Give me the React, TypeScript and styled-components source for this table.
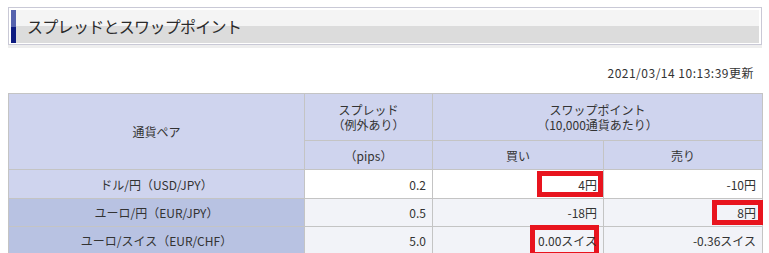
import React from "react";
import styled, { createGlobalStyle } from "styled-components";

const GlobalStyle = createGlobalStyle`
  html, body { margin: 0; padding: 0; background: #ffffff; }
  body {
    font-family: "Noto Sans CJK JP", "Noto Sans", sans-serif;
    color: #333333;
    font-size: 12px;
  }
`;

const Page = styled.div`
  width: 769px;
  box-sizing: border-box;
  padding: 7px 7px 0 8px;
`;

const TitleBox = styled.div`
  box-sizing: border-box;
  height: 38px;
  border: 1px solid #c9c9d6;
  padding: 2px 2px 1px 2px;
  box-shadow: 0 3px 0 #eeeeee;
  background: #ffffff;
`;

const TitleInner = styled.div`
  height: 100%;
  display: flex;
  align-items: center;
  background: linear-gradient(#f4f4f4 0, #f4f4f4 50%, #dcdcdc 50%, #dcdcdc 100%);
  border-left: 5px solid #0d1b80;
  border-image: linear-gradient(#5562ad 0, #5562ad 50%, #0d1b80 50%, #0d1b80 100%) 1;
`;

const TitleText = styled.h1`
  margin: -2px 0 0 11px;
  font-size: 16px;
  font-weight: normal;
  letter-spacing: -0.7px;
  color: #2a2a2a;
  line-height: 20px;
`;

const UpdatedAt = styled.div`
  margin-top: 20px;
  padding-right: 8px;
  text-align: right;
  font-size: 12px;
  letter-spacing: 0.5px;
  line-height: 16px;
`;

const Table = styled.table`
  margin-top: 12px;
  width: 754px;
  border-collapse: collapse;
  table-layout: fixed;
  border: 1px solid #c4c4c4;
`;

const Row = styled.tr<{ $h: number }>`
  height: ${(p) => p.$h}px;
`;

const Head = styled.th`
  background: #cfd4ee;
  border: 1px solid #c4c4c4;
  font-weight: normal;
  font-size: 12px;
  line-height: 15px;
  text-align: center;
  padding: 0 4px;
  color: #333333;
`;

const HeadLine = styled.span`
  display: block;
  line-height: 15px;
`;

const PairCell = styled.th<{ $dark?: boolean }>`
  background: ${(p) => (p.$dark ? "#b8c2e2" : "#cfd4ee")};
  border: 1px solid #c4c4c4;
  font-weight: normal;
  font-size: 12px;
  text-align: center;
  padding: 0 4px;
  color: #333333;
`;

const ValueCell = styled.td<{ $alt?: boolean }>`
  position: relative;
  background: ${(p) => (p.$alt ? "#f2f3f8" : "#ffffff")};
  border: 1px solid #c4c4c4;
  font-size: 12px;
  text-align: right;
  padding: 0 6px;
  color: #333333;
`;

const ValueText = styled.span`
  position: relative;
  z-index: 1;
`;

const Mark = styled.span<{ $l: number; $t: number; $r: number; $b: number }>`
  position: absolute;
  left: ${(p) => p.$l}px;
  top: ${(p) => p.$t}px;
  right: ${(p) => p.$r}px;
  bottom: ${(p) => p.$b}px;
  border: 5px solid #e8141e;
  box-sizing: border-box;
`;

type MarkBox = { l: number; t: number; r: number; b: number };
type Cell = { v: string; mark?: MarkBox };
type DataRow = { pair: string; dark: boolean; alt: boolean; h: number; spread: string; buy: Cell; sell: Cell };

const rows: DataRow[] = [
  { pair: "ドル/円（USD/JPY）", dark: false, alt: false, h: 29, spread: "0.2", buy: { v: "4円", mark: { l: 104, t: 1, r: 0, b: 1 } }, sell: { v: "-10円" } },
  { pair: "ユーロ/円（EUR/JPY）", dark: true, alt: true, h: 28, spread: "0.5", buy: { v: "-18円" }, sell: { v: "8円", mark: { l: 108, t: 1, r: -1, b: 1 } } },
  { pair: "ユーロ/スイス（EUR/CHF）", dark: true, alt: true, h: 28, spread: "5.0", buy: { v: "0.00スイス", mark: { l: 97, t: -2, r: 4, b: -3 } }, sell: { v: "-0.36スイス" } },
];

const Value: React.FC<{ cell: Cell; alt: boolean }> = ({ cell, alt }) => (
  <ValueCell $alt={alt}>
    {cell.mark && <Mark $l={cell.mark.l} $t={cell.mark.t} $r={cell.mark.r} $b={cell.mark.b} />}
    <ValueText>{cell.v}</ValueText>
  </ValueCell>
);

export default function App() {
  return (
    <>
      <GlobalStyle />
      <Page>
        <TitleBox>
          <TitleInner>
            <TitleText>スプレッドとスワップポイント</TitleText>
          </TitleInner>
        </TitleBox>
        <UpdatedAt>2021/03/14 10:13:39更新</UpdatedAt>
        <Table>
          <colgroup>
            <col style={{ width: 296 }} />
            <col style={{ width: 128 }} />
            <col style={{ width: 171 }} />
            <col style={{ width: 159 }} />
          </colgroup>
          <thead>
            <Row $h={47}>
              <Head rowSpan={2}>通貨ペア</Head>
              <Head>
                <HeadLine>スプレッド</HeadLine>
                <HeadLine>（例外あり）</HeadLine>
              </Head>
              <Head colSpan={2}>
                <HeadLine>スワップポイント</HeadLine>
                <HeadLine>（10,000通貨あたり）</HeadLine>
              </Head>
            </Row>
            <Row $h={29}>
              <Head>（pips）</Head>
              <Head>買い</Head>
              <Head>売り</Head>
            </Row>
          </thead>
          <tbody>
            {rows.map((r) => (
              <Row $h={r.h} key={r.pair}>
                <PairCell $dark={r.dark}>{r.pair}</PairCell>
                <ValueCell $alt={r.alt}>{r.spread}</ValueCell>
                <Value cell={r.buy} alt={r.alt} />
                <Value cell={r.sell} alt={r.alt} />
              </Row>
            ))}
          </tbody>
        </Table>
      </Page>
    </>
  );
}
